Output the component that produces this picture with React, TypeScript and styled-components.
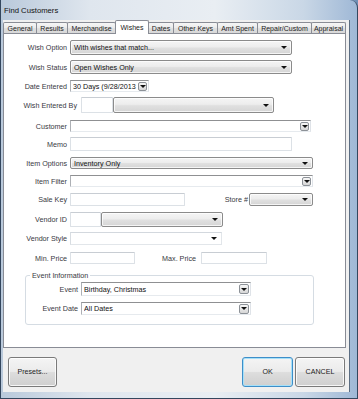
import React from "react";
import styled, { createGlobalStyle } from "styled-components";

const GlobalStyle = createGlobalStyle`
  html, body {
    margin: 0;
    padding: 0;
    background: #6f8fb5;
    overflow: hidden;
  }
  body {
    font-family: "Liberation Sans", Arial, sans-serif;
    font-size: 7.2px;
    color: #383842;
  }
`;

const Window = styled.div`
  box-sizing: border-box;
  width: 358px;
  height: 399px;
  display: flex;
  flex-direction: column;
  padding: 0 7px 6px 2px;
  border: 1px solid #34475e;
  border-top: none;
  border-radius: 0 8px 0 0;
  background: linear-gradient(90deg, #b9c9db 0%, #dfe6ee 25%, #e9eef3 60%, #c9d7e6 85%, #9fb8d6 100%);
  overflow: hidden;
`;

const TitleBar = styled.div`
  box-sizing: border-box;
  height: 20px;
  display: flex;
  align-items: center;
  padding: 1px 0 0 1px;
  font-size: 7.7px;
  color: #111;
  flex: none;
`;

const Client = styled.div`
  flex: 1;
  min-height: 0;
  display: flex;
  flex-direction: column;
  background: #f0f0f0;
  border-right: 1px solid #5b6d82;
`;

const TabStrip = styled.div`
  box-sizing: border-box;
  height: 14px;
  display: flex;
  align-items: flex-end;
  margin-right: 3px;
  border-bottom: 1px solid #898c95;
  flex: none;
`;

const Tab = styled.div<{ $w: number; $active?: boolean }>`
  box-sizing: border-box;
  width: ${(p) => p.$w}px;
  height: ${(p) => (p.$active ? 14 : 11)}px;
  margin-right: -1px;
  margin-bottom: ${(p) => (p.$active ? -1 : 0)}px;
  display: flex;
  align-items: center;
  justify-content: center;
  padding-bottom: ${(p) => (p.$active ? 1 : 0)}px;
  border: 1px solid #898c95;
  border-bottom: none;
  border-radius: 2px 2px 0 0;
  background: ${(p) =>
    p.$active ? "#fff" : "linear-gradient(#f6f6f6, #eaeaea 50%, #e0e0e0 51%, #d8d8d8)"};
  font-size: 7px;
  color: #222;
  white-space: nowrap;
  flex: none;
`;

const Panel = styled.div`
  box-sizing: border-box;
  height: 314px;
  margin-right: 3px;
  display: flex;
  flex-direction: column;
  background: #fff;
  border: 1px solid #898c95;
  border-top: none;
  flex: none;
`;

const Row = styled.div<{ $mt: number; $h: number }>`
  display: flex;
  align-items: center;
  height: ${(p) => p.$h}px;
  margin-top: ${(p) => p.$mt}px;
  flex: none;
`;

const Label = styled.div<{ $w: number; $gap?: number; $ml?: number }>`
  width: ${(p) => p.$w}px;
  margin-left: ${(p) => p.$ml ?? 0}px;
  margin-right: ${(p) => p.$gap ?? 3}px;
  text-align: right;
  white-space: nowrap;
  flex: none;
`;

const TextBox = styled.input<{ $w: number }>`
  box-sizing: border-box;
  width: ${(p) => p.$w}px;
  height: 100%;
  margin: 0;
  padding: 0 2px;
  background: #fff;
  border: 1px solid #dce1e6;
  border-top-color: #c8cdd3;
  border-radius: 1px;
  font: inherit;
  outline: none;
  flex: none;
`;

const DropList = styled.div<{ $w: number }>`
  box-sizing: border-box;
  width: ${(p) => p.$w}px;
  height: 100%;
  display: flex;
  align-items: center;
  justify-content: space-between;
  padding: 0 4px 0 3px;
  border: 1px solid #8b8b8b;
  border-radius: 2px;
  background: linear-gradient(#f5f5f5, #ededed 45%, #e0e0e0 55%, #d5d5d5);
  box-shadow: inset 0 0 0 1px rgba(255, 255, 255, 0.75);
  color: #111;
  white-space: nowrap;
  overflow: hidden;
  flex: none;
`;

const Combo = styled.div<{ $w: number; $plain?: boolean }>`
  box-sizing: border-box;
  width: ${(p) => p.$w}px;
  height: 100%;
  display: flex;
  align-items: center;
  padding: 0 1px 0 2px;
  background: #fff;
  border: 1px solid;
  border-color: ${(p) =>
    p.$plain ? "#d3d8de #e2e6ea #e2e6ea #d8dde2" : "#8f9092 #dfe3e8 #e6eaee #adb0b5"};
  color: #111;
  white-space: nowrap;
  overflow: hidden;
  flex: none;
`;

const ComboText = styled.span`
  flex: 1;
  overflow: hidden;
  white-space: nowrap;
`;

const DropButton = styled.span<{ $s: number }>`
  box-sizing: border-box;
  width: ${(p) => p.$s}px;
  height: ${(p) => p.$s}px;
  display: flex;
  align-items: center;
  justify-content: center;
  border: 1px solid #8c9197;
  border-radius: 2px;
  background: linear-gradient(#f7f7f7, #e6e6e6 50%, #d6d6d6);
  flex: none;
`;

const Arrow = styled.span`
  width: 0;
  height: 0;
  border-left: 3px solid transparent;
  border-right: 3px solid transparent;
  border-top: 3px solid #111;
  flex: none;
`;

const PlainArrow = styled(Arrow)`
  margin-right: 3px;
`;

const GroupBox = styled.div`
  box-sizing: border-box;
  width: 289px;
  height: 50px;
  margin: 11px 0 0 21px;
  display: flex;
  flex-direction: column;
  border: 1px solid #d5dce3;
  border-radius: 3px;
  flex: none;
`;

const Legend = styled.div`
  align-self: flex-start;
  height: 9px;
  line-height: 9px;
  margin: -5px 0 0 4px;
  padding: 0 2px;
  background: #fff;
`;

const Footer = styled.div`
  box-sizing: border-box;
  height: 44px;
  display: flex;
  align-items: flex-start;
  gap: 2px;
  padding: 9px 4px 0 5px;
  flex: none;
`;

const Spacer = styled.div`
  flex: 1;
`;

const Button = styled.div<{ $w: number; $primary?: boolean }>`
  box-sizing: border-box;
  width: ${(p) => p.$w}px;
  height: 30px;
  display: flex;
  align-items: center;
  justify-content: center;
  border: 1px solid ${(p) => (p.$primary ? "#3d8ec9" : "#7a7a7a")};
  border-radius: 3px;
  background: linear-gradient(#f4f4f4, #ebebeb 48%, #dddddd 52%, #cfcfcf);
  box-shadow: inset 0 0 0 1px ${(p) => (p.$primary ? "#a6e0f8" : "rgba(255,255,255,0.8)")};
  font-size: 7.1px;
  color: #222;
  flex: none;
`;

const tabs: { name: string; w: number; active?: boolean }[] = [
  { name: "General", w: 34 },
  { name: "Results", w: 32 },
  { name: "Merchandise", w: 49 },
  { name: "Wishes", w: 34, active: true },
  { name: "Dates", w: 26 },
  { name: "Other Keys", w: 45 },
  { name: "Amt Spent", w: 41 },
  { name: "Repair/Custom", w: 55 },
  { name: "Appraisal", w: 35 },
];

const App = () => {
  return (
    <>
      <GlobalStyle />
      <Window>
        <TitleBar>Find Customers</TitleBar>
        <Client>
          <TabStrip>
            {tabs.map((t) => (
              <Tab key={t.name} $w={t.w} $active={t.active}>
                {t.name}
              </Tab>
            ))}
          </TabStrip>
          <Panel>
            <Row $mt={6} $h={15}>
              <Label $w={63}>Wish Option</Label>
              <DropList $w={222}>
                With wishes that match...
                <Arrow />
              </DropList>
            </Row>
            <Row $mt={5} $h={14}>
              <Label $w={63}>Wish Status</Label>
              <DropList $w={222}>
                Open Wishes Only
                <Arrow />
              </DropList>
            </Row>
            <Row $mt={6} $h={12}>
              <Label $w={63}>Date Entered</Label>
              <Combo $w={79}>
                <ComboText>30 Days (9/28/2013</ComboText>
                <DropButton $s={9}>
                  <Arrow />
                </DropButton>
              </Combo>
            </Row>
            <Row $mt={5} $h={16}>
              <Label $w={73} $gap={4}>
                Wish Entered By
              </Label>
              <TextBox $w={32} defaultValue="" />
              <DropList $w={161}>
                <span />
                <Arrow />
              </DropList>
            </Row>
            <Row $mt={7} $h={12}>
              <Label $w={63}>Customer</Label>
              <Combo $w={241}>
                <ComboText />
                <DropButton $s={9}>
                  <Arrow />
                </DropButton>
              </Combo>
            </Row>
            <Row $mt={5} $h={14}>
              <Label $w={63}>Memo</Label>
              <TextBox $w={222} defaultValue="" />
            </Row>
            <Row $mt={6} $h={12}>
              <Label $w={63}>Item Options</Label>
              <DropList $w={243}>
                Inventory Only
                <Arrow />
              </DropList>
            </Row>
            <Row $mt={6} $h={12}>
              <Label $w={63}>Item Filter</Label>
              <Combo $w={243}>
                <ComboText />
                <DropButton $s={9}>
                  <Arrow />
                </DropButton>
              </Combo>
            </Row>
            <Row $mt={6} $h={13}>
              <Label $w={63}>Sale Key</Label>
              <TextBox $w={115} defaultValue="" />
              <Label $w={25} $ml={38} $gap={1}>
                Store #
              </Label>
              <DropList $w={64}>
                <span />
                <Arrow />
              </DropList>
            </Row>
            <Row $mt={6} $h={15}>
              <Label $w={63}>Vendor ID</Label>
              <TextBox $w={31} defaultValue="" />
              <DropList $w={122}>
                <span />
                <Arrow />
              </DropList>
            </Row>
            <Row $mt={5} $h={13}>
              <Label $w={63}>Vendor Style</Label>
              <Combo $w={152} $plain>
                <ComboText />
                <PlainArrow />
              </Combo>
            </Row>
            <Row $mt={7} $h={12}>
              <Label $w={63}>Min. Price</Label>
              <TextBox $w={65} defaultValue="" />
              <Label $w={35} $ml={26} $gap={5}>
                Max. Price
              </Label>
              <TextBox $w={66} defaultValue="" />
            </Row>
            <GroupBox>
              <Legend>Event Information</Legend>
              <Row $mt={2} $h={14}>
                <Label $w={52}>Event</Label>
                <Combo $w={170}>
                  <ComboText>Birthday, Christmas</ComboText>
                  <DropButton $s={10}>
                    <Arrow />
                  </DropButton>
                </Combo>
              </Row>
              <Row $mt={6} $h={13}>
                <Label $w={52}>Event Date</Label>
                <Combo $w={170}>
                  <ComboText>All Dates</ComboText>
                  <DropButton $s={10}>
                    <Arrow />
                  </DropButton>
                </Combo>
              </Row>
            </GroupBox>
          </Panel>
          <Footer>
            <Button $w={49}>Presets...</Button>
            <Spacer />
            <Button $w={51} $primary>
              OK
            </Button>
            <Button $w={50}>CANCEL</Button>
          </Footer>
        </Client>
      </Window>
    </>
  );
};

export default App;
